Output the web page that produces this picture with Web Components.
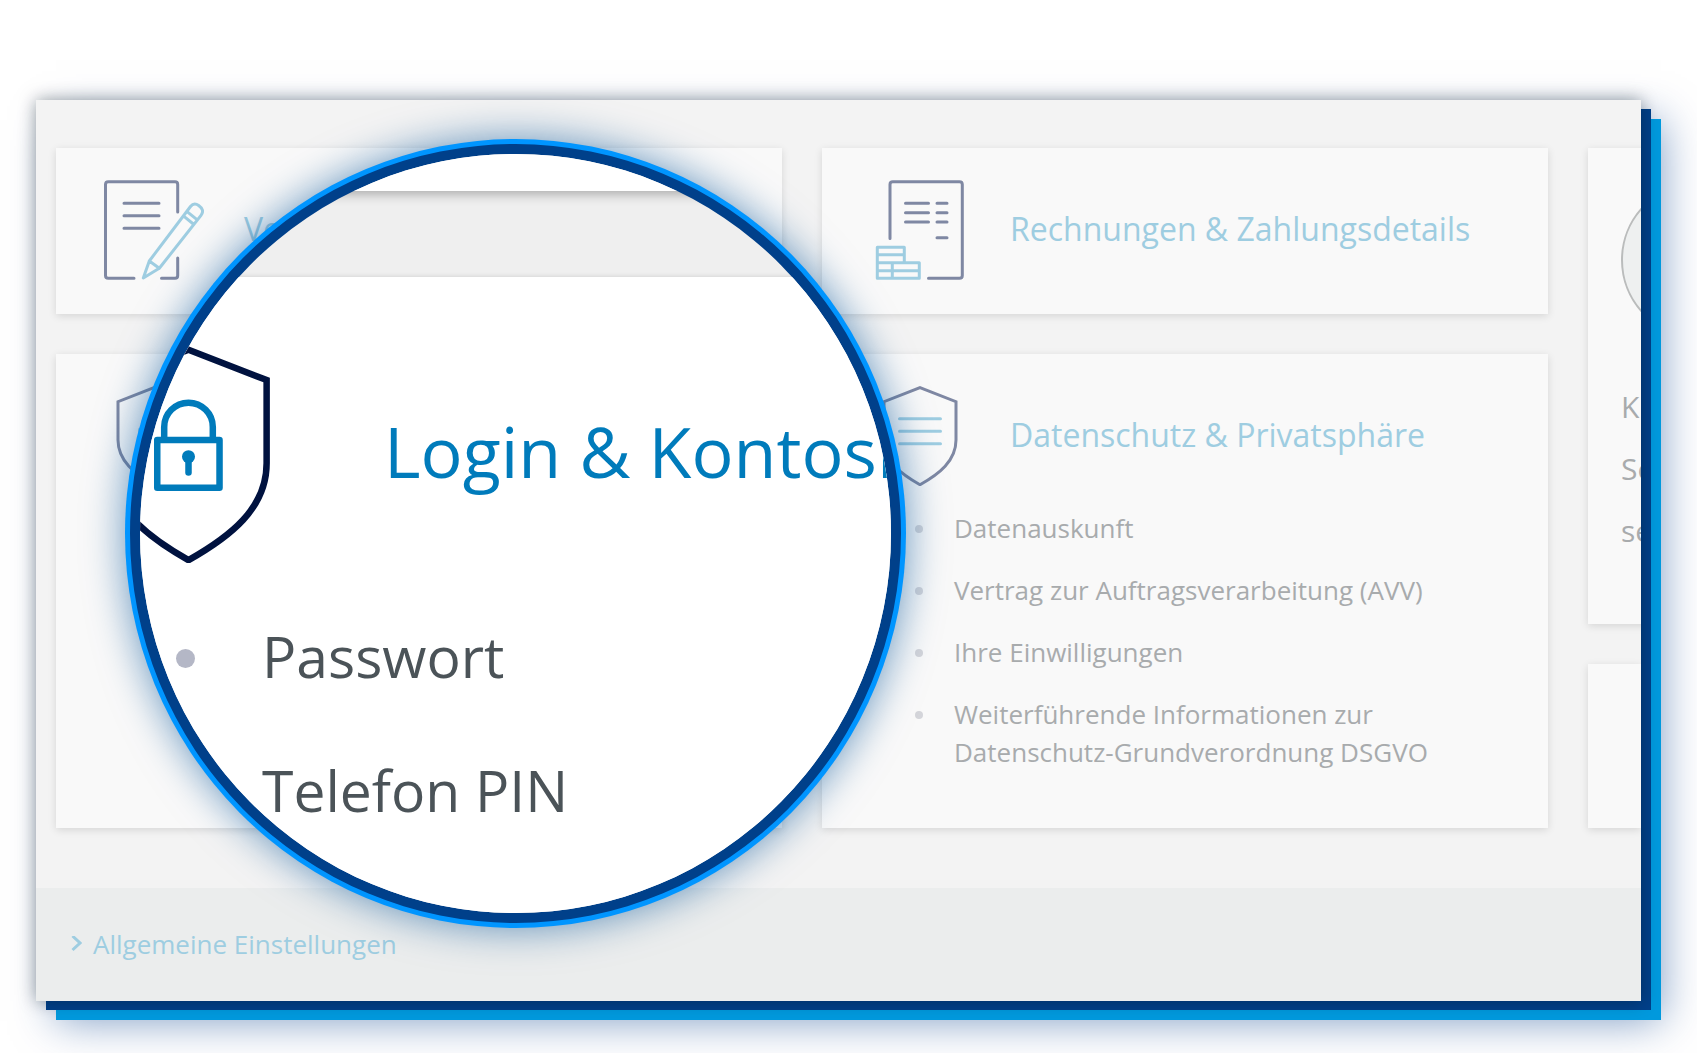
<!DOCTYPE html>
<html lang="de">
<head>
<meta charset="utf-8">
<meta name="viewport" content="width=device-width, initial-scale=1">
<title>Mein Konto</title>
<style>
  body {
    margin: 0;
    padding: 100px 56px 52px 36px;
    background: #fff;
    font-family: "Open Sans", "Noto Sans", sans-serif;
  }
</style>
</head>
<body>
<account-panel>
  <settings-card>
    <line-icon slot="icon" name="contract"></line-icon>
    <a slot="title" href="#vertraege">Ve</a>
  </settings-card>
  <settings-card>
    <line-icon slot="icon" name="invoice"></line-icon>
    <a slot="title" href="#rechnungen">Rechnungen &amp; Zahlungsdetails</a>
  </settings-card>
  <settings-card>
    <line-icon slot="icon" name="lock"></line-icon>
  </settings-card>
  <settings-card>
    <line-icon slot="icon" name="privacy"></line-icon>
    <a slot="title" href="#datenschutz">Datenschutz &amp; Privatsphäre</a>
    <link-list slot="list">
      <a href="#auskunft">Datenauskunft</a>
      <a href="#avv">Vertrag zur Auftragsverarbeitung (AVV)</a>
      <a href="#einwilligungen">Ihre Einwilligungen</a>
      <a href="#dsgvo">Weiterführende Informationen zur Datenschutz-Grundverordnung DSGVO</a>
    </link-list>
  </settings-card>

  <profile-card slot="aside">
    <span>K</span>
    <span>Se</span>
    <span>se</span>
  </profile-card>

  <a slot="footer" href="#allgemein">Allgemeine Einstellungen</a>

  <zoom-lens slot="lens">
    <line-icon slot="icon" name="lock"></line-icon>
    <a slot="title" href="#login">Login &amp; Kontosi</a>
    <link-list slot="list">
      <a href="#passwort">Passwort</a>
      <a href="#telefon-pin">Telefon PIN</a>
    </link-list>
  </zoom-lens>
</account-panel>

<script>
  const SHIELD = '<path class="dark" stroke-linejoin="miter" d="M50 1.7 86 15.7V54C86 75 69 88 50 98.7 31 88 14 75 14 54V15.7Z"/>';

  const ICONS = {
    contract: `
      <path class="dark" d="M73.7 32V4.5Q73.7 1.7 71 1.7H4.3Q1.5 1.7 1.5 4.5V95.5Q1.5 98.3 4.3 98.3H30M57.5 98.3H71Q73.7 98.3 73.7 95.5V78"/>
      <path class="dark" d="M20 23.3H55M20 35.7H55M20 48.3H55"/>
      <path class="light" d="M39.3 98 45.3 81 86.5 26.5Q90 22 94.7 25.5 101 30 97 35.3L55.3 88.3ZM45.3 81 55.3 88.3M80.3 36.7 89.3 44M84 32.3 93 39.7"/>`,
    invoice: `
      <path class="dark" d="M20 58.5V4.5Q20 1.7 22.8 1.7H89.5Q92.3 1.7 92.3 4.5V95.5Q92.3 98.3 89.5 98.3H58.5"/>
      <path class="dark" d="M35.5 23.3H58.5M35.5 32.7H58.5M35.5 42H58.5M67 23.3H77M67 32.7H77M67 42H77M67 57.7H77"/>
      <path class="light" d="M7.3 67.3H34.3V82.7M7.3 67.3V98.3H49.3V82.7H7.3M7.3 74.7H34.3M7.3 90.7H49.3M22.3 82.7V98.3"/>`,
    privacy: `
      ${SHIELD}
      <path class="light" d="M29.5 32.7H70.5M29.5 45.3H70.5M29.5 57.7H70.5"/>`,
    lock: `
      ${SHIELD}
      <path class="light" d="M35.6 43.3H64.3V65.3H35.6ZM38.8 43.3V37.3A11.2 11.2 0 0 1 61.2 37.3V43.3"/>
      <circle class="fill" cx="50" cy="51" r="3"/>
      <path class="light" d="M50 51V58.3"/>`
  };

  class LineIcon extends HTMLElement {
    constructor() {
      super();
      this.attachShadow({ mode: 'open' });
    }

    connectedCallback() {
      this.shadowRoot.innerHTML = `
        <style>
          :host { display: block; flex: none; width: var(--icon-size, 100px); height: var(--icon-size, 100px); }
          svg { display: block; width: 100%; height: 100%; }
          path { fill: none; stroke-width: 3; stroke-linecap: round; }
          path:not([stroke-linejoin]) { stroke-linejoin: round; }
          .dark { stroke: var(--icon-dark, #7f88a3); }
          .light { stroke: var(--icon-light, #9ecde1); }
          .fill { fill: var(--icon-light, #9ecde1); }
        </style>
        <svg viewBox="0 0 100 100" aria-hidden="true">${ICONS[this.getAttribute('name')]}</svg>
      `;
    }
  }

  // Wraps every link it is given in a bulleted list item
  class LinkList extends HTMLElement {
    constructor() {
      super();
      this.attachShadow({ mode: 'open' });
    }

    connectedCallback() {
      const links = [...this.children];
      links.forEach((link, i) => { link.slot = `item-${i}`; });
      this.shadowRoot.innerHTML = `
        <style>
          :host { display: block; }
          ul {
            display: flex;
            flex-direction: column;
            gap: var(--list-gap, 24px);
            margin: 0;
            padding: 0 0 0 var(--list-indent, 45px);
            list-style: none;
            font-size: var(--list-size, 26px);
            line-height: var(--list-line, 38px);
          }
          li { display: flex; align-items: flex-start; gap: var(--bullet-gap, 31px); }
          li::before {
            content: "";
            flex: none;
            width: var(--bullet, 8px);
            height: var(--bullet, 8px);
            margin-top: var(--bullet-top, 16px);
            border-radius: 50%;
            background: var(--bullet-color, #d4d5da);
          }
          ::slotted(a) { color: var(--list-color, #a8abad); text-decoration: none; }
        </style>
        <ul>${links.map((link, i) => `<li><slot name="item-${i}"></slot></li>`).join('')}</ul>
      `;
    }
  }

  class SettingsCard extends HTMLElement {
    constructor() {
      super();
      this.attachShadow({ mode: 'open' });
      this.shadowRoot.innerHTML = `
        <style>
          :host {
            display: block;
            padding: 32px 48px 34px;
            background: #f9f9f9;
            box-shadow: 0 2px 8px rgba(0, 0, 0, 0.12);
          }
          header { display: flex; align-items: center; gap: 40px; }
          h2 { margin: 0; padding-bottom: 2px; font-size: 32px; line-height: 48px; font-weight: 400; }
          ::slotted(a) { color: #9ecde1; text-decoration: none; }
          ::slotted(link-list) { margin: 23px 0; }
        </style>
        <header>
          <slot name="icon"></slot>
          <h2><slot name="title"></slot></h2>
        </header>
        <slot name="list"></slot>
      `;
    }
  }

  class ProfileCard extends HTMLElement {
    constructor() {
      super();
      this.attachShadow({ mode: 'open' });
      this.shadowRoot.innerHTML = `
        <style>
          :host { display: flex; flex-direction: column; gap: 40px; }
          section {
            padding: 34px 33px 62px;
            background: #f9f9f9;
            box-shadow: 0 2px 8px rgba(0, 0, 0, 0.12);
          }
          .next { flex: 1; padding: 0; }
          .avatar {
            box-sizing: border-box;
            width: 156px;
            height: 156px;
            margin-bottom: 38px;
            border: 2px solid #babcbc;
            border-radius: 50%;
            background: #eef0f0;
          }
          ::slotted(span) {
            display: block;
            color: #a8abad;
            font-size: 30px;
            line-height: 62px;
            white-space: nowrap;
          }
        </style>
        <section>
          <div class="avatar"></div>
          <slot></slot>
        </section>
        <section class="next"></section>
      `;
    }
  }

  class ZoomLens extends HTMLElement {
    constructor() {
      super();
      this.attachShadow({ mode: 'open' });
      this.shadowRoot.innerHTML = `
        <style>
          :host {
            box-sizing: border-box;
            display: block;
            width: 771px;
            height: 779px;
            overflow: hidden;
            border: 10px solid #00408a;
            border-radius: 50%;
            background: #efefef;
            box-shadow: 0 0 0 5px #0095ff, 0 0 40px 5px rgba(0, 80, 150, 0.6);
            --icon-size: 217px;
            --icon-dark: #00123f;
            --icon-light: #007bbb;
            --list-size: 57px;
            --list-line: 82px;
            --list-gap: 52px;
            --list-indent: 36px;
            --list-color: #4b5358;
            --bullet: 19px;
            --bullet-gap: 67px;
            --bullet-top: 34px;
            --bullet-color: #b4b7c6;
          }
          .lens { display: flex; flex-direction: column; gap: 86px; height: 100%; }
          .above { height: 37px; background: #fff; box-shadow: 0 3px 12px rgba(0, 0, 0, 0.3); }
          .card {
            flex: 1;
            padding-top: 69px;
            background: #fff;
            box-shadow: 0 0 5px rgba(0, 0, 0, 0.14);
          }
          /* the card is larger than the glass, its left edge stays outside */
          header { display: flex; align-items: center; gap: 87px; margin-left: -60px; }
          h2 {
            margin: 0;
            padding-bottom: 8px;
            font-size: 70px;
            line-height: 100px;
            font-weight: 400;
            white-space: nowrap;
          }
          ::slotted(a) { color: #007bbb; text-decoration: none; }
          ::slotted(link-list) { margin-top: 52px; }
        </style>
        <div class="lens">
          <div class="above"></div>
          <div class="card">
            <header>
              <slot name="icon"></slot>
              <h2><slot name="title"></slot></h2>
            </header>
            <slot name="list"></slot>
          </div>
        </div>
      `;
    }
  }

  class AccountPanel extends HTMLElement {
    constructor() {
      super();
      this.attachShadow({ mode: 'open' });
      this.shadowRoot.innerHTML = `
        <style>
          :host {
            display: block;
            position: relative;
            background: #f3f3f3;
            box-shadow:
              0 0 16px rgba(0, 20, 30, 0.4),
              10px 9px 0 #00408a,
              20px 19px 0 #0099dd,
              20px 20px 40px rgba(0, 60, 140, 0.5);
          }
          main {
            display: grid;
            grid-template-columns: minmax(0, 1fr) 53px;
            gap: 40px;
            padding: 48px 0 60px 20px;
            overflow: hidden;
          }
          .cards {
            display: grid;
            grid-template-columns: repeat(2, minmax(0, 1fr));
            grid-template-rows: auto 1fr;
            gap: 40px;
          }
          footer {
            display: flex;
            align-items: center;
            gap: 11px;
            padding: 37px 35px 38px;
            background: #ebeded;
            font-size: 26px;
            line-height: 38px;
          }
          footer svg { width: 11px; height: 16px; fill: none; stroke: #9ecde1; stroke-width: 3; }
          ::slotted(a) { color: #9ecde1; text-decoration: none; }
          ::slotted(zoom-lens) { position: absolute; left: 94px; top: 44px; }
        </style>
        <main>
          <div class="cards"><slot></slot></div>
          <slot name="aside"></slot>
        </main>
        <footer>
          <svg viewBox="0 0 11 16" aria-hidden="true"><path d="M1.5 0 9 7 1.5 14"/></svg>
          <slot name="footer"></slot>
        </footer>
        <slot name="lens"></slot>
      `;
    }
  }

  customElements.define('line-icon', LineIcon);
  customElements.define('link-list', LinkList);
  customElements.define('settings-card', SettingsCard);
  customElements.define('profile-card', ProfileCard);
  customElements.define('zoom-lens', ZoomLens);
  customElements.define('account-panel', AccountPanel);
</script>
</body>
</html>
